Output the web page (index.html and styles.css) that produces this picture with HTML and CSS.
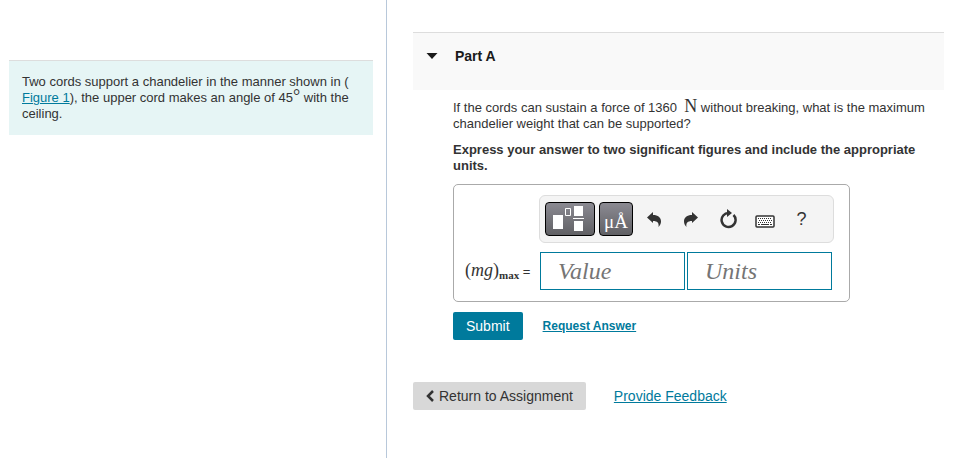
FILE: index.html
```html
<!DOCTYPE html>
<html lang="en">
<head>
    <meta charset="UTF-8">
    <meta name="viewport" content="width=device-width, initial-scale=1.0">
    <title>Part A</title>
    <link rel="stylesheet" href="styles.css">
</head>
<body>
    <div class="page">
        <aside class="sidebar">
            <div class="intro">
                Two cords support a chandelier in the manner shown in (<br><a href="#">Figure 1</a>), the upper cord makes an angle of 45<span class="degree">°</span> with the ceiling.
            </div>
        </aside>

        <main class="content">
            <div class="part-header">
                <svg class="caret" viewBox="0 0 12 6" width="12" height="6"><path d="M0.5 0h11L6 6z" fill="#1a1a1a"/></svg>
                <h2>Part A</h2>
            </div>

            <div class="part-body">
                <p class="question">If the cords can sustain a force of 1360 &nbsp;<span class="unit">N</span> without breaking, what is the maximum chandelier weight that can be supported?</p>
                <p class="instructions">Express your answer to two significant figures and include the appropriate units.</p>

                <form class="answer-box">
                    <div class="toolbar">
                        <button type="button" class="tool dark templates" aria-label="Templates">
                            <svg viewBox="0 0 48 32" width="48" height="32">
                                <g fill="#fff">
                                    <path d="M7 12h10v14H7z"/>
                                    <path d="M28 3h9v10h-9zM27 15h11v1H27zM28 18h9v10h-9z"/>
                                </g>
                                <path d="M19.5 5.5h5v7h-5z" fill="none" stroke="#fff"/>
                            </svg>
                        </button>
                        <button type="button" class="tool dark symbols">μÅ</button>
                        <button type="button" class="tool" aria-label="Undo">
                            <svg viewBox="0 0 14 15" width="14" height="15"><path d="M0 5.500L6 0v3c5 0 8 2.500 8 6.500 0 2-1 4-2.500 5.500 .7-4-1-6-5.500-6V11z" fill="#333"/></svg>
                        </button>
                        <button type="button" class="tool" aria-label="Redo">
                            <svg viewBox="0 0 14 15" width="14" height="15"><path d="M14 5.500L8 0v3C3 3 0 5.500 0 9.500c0 2 1 4 2.500 5.500C1.800 11 3.500 9 8 9v2z" fill="#333"/></svg>
                        </button>
                        <button type="button" class="tool" aria-label="Reset">
                            <svg viewBox="0 0 18 20" width="18" height="20"><path d="M10 4A7 7 0 1 0 14.500 6" fill="none" stroke="#333" stroke-width="2.500"/><path d="M8 0l5 4-5 4z" fill="#333"/></svg>
                        </button>
                        <button type="button" class="tool keyboard" aria-label="Keyboard">
                            <svg viewBox="0 0 20 13" width="20" height="13">
                                <rect x="1" y="1" width="18" height="11" rx="1" fill="#fff" stroke="#333" stroke-width="1.500"/>
                                <path d="M3 3.500h14M4 5.500h13M3 7.500h14" stroke="#333" stroke-dasharray="1 1"/>
                                <path d="M3 9.500h2M6 9.500h8M15 9.500h2" stroke="#333"/>
                            </svg>
                        </button>
                        <button type="button" class="tool help">?</button>
                    </div>
                    <div class="answer-row">
                        <label for="value" class="answer-label"><span class="math">(<i>mg</i>)<sub>max</sub></span> =</label>
                        <input type="text" id="value" placeholder="Value">
                        <input type="text" id="units" placeholder="Units" aria-label="Units">
                    </div>
                </form>

                <div class="actions">
                    <button type="button" class="submit">Submit</button>
                    <a href="#" class="request">Request Answer</a>
                </div>
            </div>

            <div class="footer">
                <button type="button" class="return">
                    <svg viewBox="0 0 8 12" width="8" height="12"><path d="M7 1L2 6l5 5" fill="none" stroke="#333" stroke-width="2.500"/></svg>
                    Return to Assignment
                </button>
                <a href="#">Provide Feedback</a>
            </div>
        </main>
    </div>
</body>
</html>
```

FILE: styles.css
```css
body {
    margin: 0;
    background: #fff;
    color: #333;
    font-family: Arial, "Liberation Sans", sans-serif;
    font-size: 13px;
    line-height: 16px;
}

a {
    color: #007a9c;
    text-decoration: underline;
}

button {
    font-family: inherit;
    border: none;
    cursor: pointer;
}

.page {
    display: grid;
    grid-template-columns: 387fr 583fr;
    min-height: 100vh;
}

.sidebar {
    border-right: 1px solid #b8c8da;
    padding: 60px 13px 0 9px;
}

.intro {
    background: #e6f5f5;
    border-top: 1px solid #ddd;
    padding: 13px 20px 13px 13px;
}

.degree {
    font-family: "Liberation Serif", serif;
    font-size: 18px;
    line-height: 0;
}

.content {
    padding: 32px 26px 0;
}

.part-header {
    display: flex;
    align-items: flex-start;
    gap: 17px;
    background: #f9f9f9;
    border-top: 1px solid #ddd;
    padding: 15px 13px 26px;
}

.part-header .caret {
    margin-top: 5px;
}

.part-header h2 {
    margin: 0;
    color: #1a1a1a;
    font-size: 14px;
    line-height: 16px;
}

.part-body {
    padding: 10px 0 0 40px;
}

.part-body p {
    margin: 0 0 10px;
}

.unit {
    font-family: "Liberation Serif", serif;
    font-size: 18px;
    line-height: 0;
}

.instructions {
    font-weight: bold;
}

.answer-box {
    width: 395px;
    max-width: 100%;
    border: 1px solid #aaa;
    border-radius: 5px;
    padding: 10px 0 11px;
}

.toolbar {
    display: flex;
    align-items: center;
    gap: 4px;
    width: 283px;
    margin-left: 85px;
    padding: 6px 5px;
    background: #f4f4f4;
    border: 1px solid #ddd;
    border-radius: 6px;
}

.tool {
    display: flex;
    align-items: center;
    justify-content: center;
    flex: none;
    width: 33px;
    height: 34px;
    padding: 0;
    background: none;
    color: #333;
}

.tool.dark {
    box-sizing: border-box;
    background: linear-gradient(#8b8a92, #606064);
    border: 1px solid #000;
    border-radius: 4px;
    color: #fff;
}

.tool.templates {
    width: 50px;
}

.tool.symbols {
    width: 34px;
    padding-top: 6px;
    font-family: "Liberation Serif", serif;
    font-size: 19px;
}

.tool.keyboard {
    padding-top: 4px;
}

.help {
    font-size: 18px;
}

.answer-row {
    display: flex;
    align-items: center;
    gap: 2px;
    margin-top: 9px;
}

.answer-label {
    width: 73px;
    padding-left: 11px;
    white-space: nowrap;
}

.math {
    font-family: "Liberation Serif", serif;
    font-size: 18px;
}

.math sub {
    font-size: 11px;
    font-weight: bold;
    line-height: 0;
    vertical-align: -3px;
}

.answer-row input {
    box-sizing: border-box;
    width: 145px;
    height: 38px;
    padding: 0 17px;
    border: 1px solid #007a9c;
    border-radius: 0;
    background: #fff;
    color: #333;
    font-family: "Liberation Serif", serif;
    font-size: 24px;
}

.answer-row input::placeholder {
    color: #757575;
    font-style: italic;
}

.actions {
    display: flex;
    align-items: center;
    gap: 20px;
    margin-top: 10px;
}

.submit {
    height: 28px;
    padding: 0 13px;
    border-radius: 2px;
    background: #007a9c;
    color: #fff;
    font-size: 14px;
}

.request {
    font-size: 12px;
    font-weight: bold;
}

.footer {
    display: flex;
    align-items: center;
    gap: 28px;
    margin-top: 42px;
    font-size: 14px;
}

.return {
    display: flex;
    align-items: center;
    gap: 5px;
    height: 28px;
    padding: 0 13px;
    border-radius: 2px;
    background: #d8d8d8;
    color: #333;
    font-size: 14px;
}
```
